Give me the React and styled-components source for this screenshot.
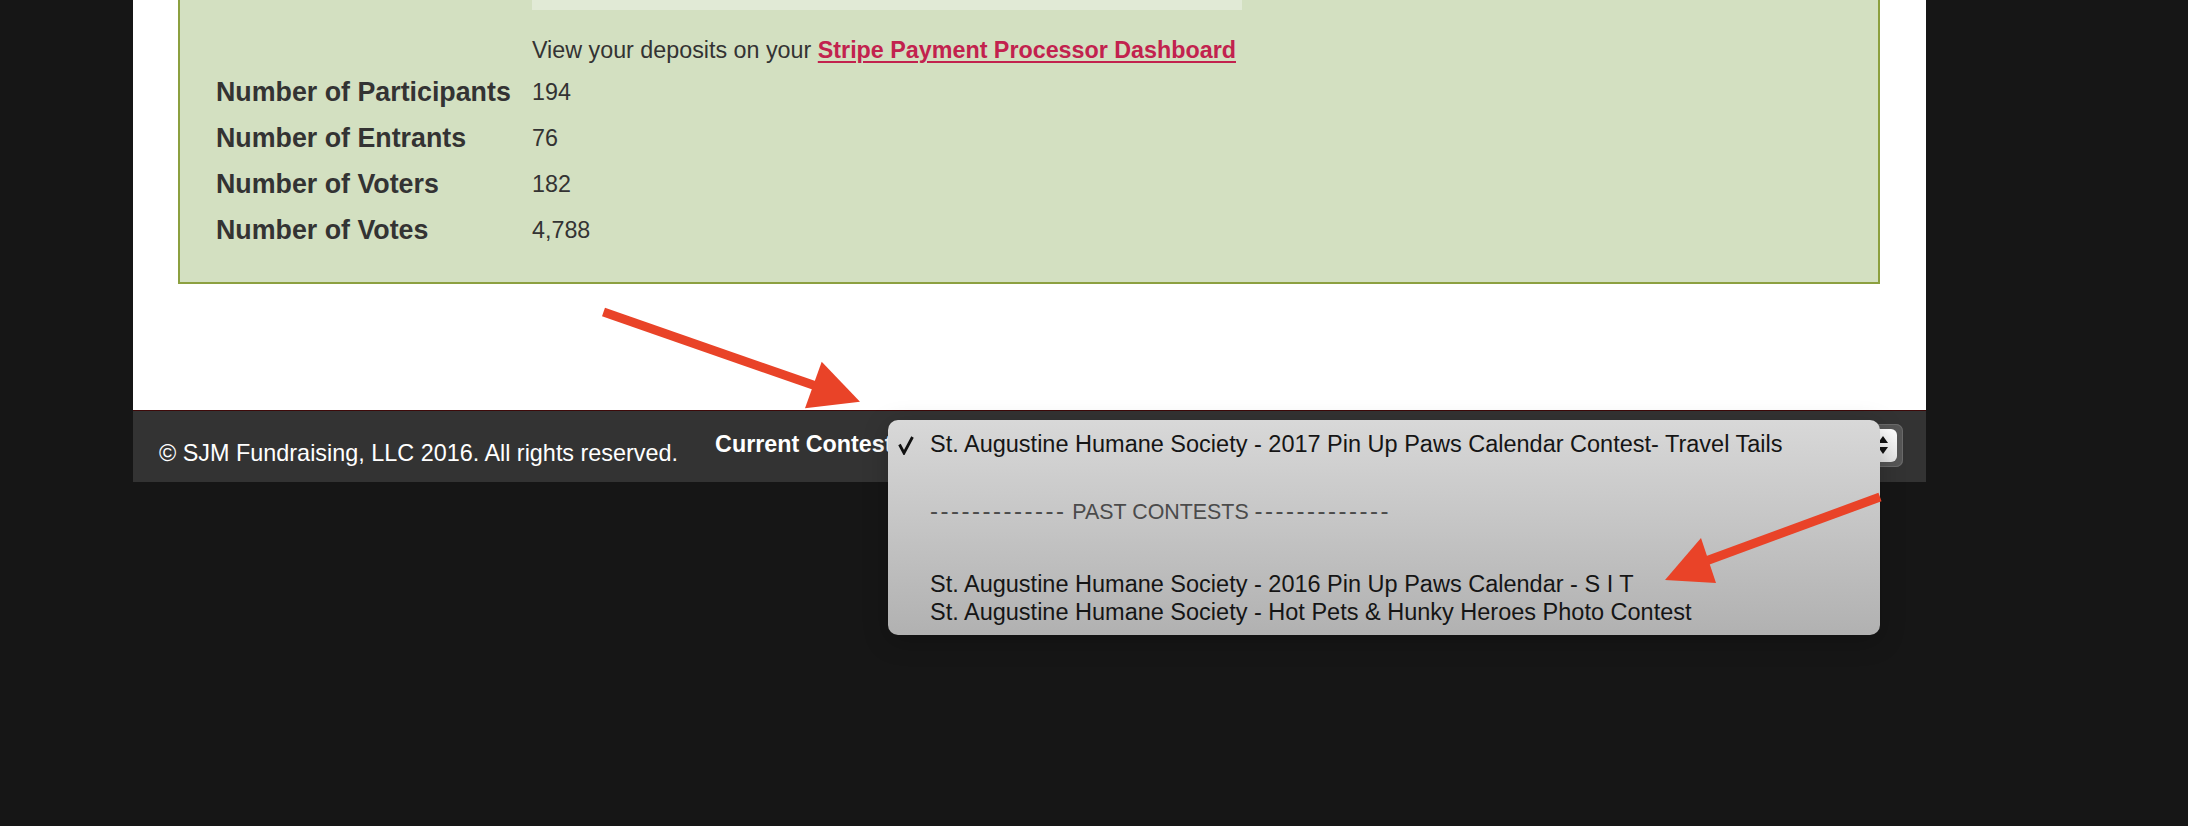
import { Fragment } from "react";
import styled, { createGlobalStyle } from "styled-components";

const GlobalStyle = createGlobalStyle`
  html, body {
    margin: 0;
    padding: 0;
    background: #161616;
  }
  body {
    font-family: "Liberation Sans", Arial, sans-serif;
    overflow: hidden;
  }
`;

const Screen = styled.div`
  position: relative;
  width: 2188px;
  height: 826px;
  padding-left: 133px;
  box-sizing: border-box;
`;

const Page = styled.div`
  width: 1793px;
  display: flex;
  flex-direction: column;
`;

const Content = styled.div`
  background: #fff;
  height: 410px;
  padding: 0 46px 0 45px;
  box-sizing: border-box;
`;

const StatsPanel = styled.div`
  display: grid;
  grid-template-columns: 316px 1fr;
  background: #d3e0c1;
  border: 2px solid #8ca040;
  border-top: 0;
  padding: 0 0 28.5px 36px;
  color: #333;
`;

const NoteBox = styled.div`
  grid-column: 2;
  width: 710px;
  height: 10px;
  background: #e1ead6;
`;

const Deposit = styled.div`
  grid-column: 2;
  margin: 26px 0 5.2px;
  font-size: 23.3px;
  line-height: 28px;
`;

const StripeLink = styled.a`
  color: #c2224e;
  font-weight: bold;
  text-decoration: underline;
  text-decoration-thickness: 2px;
  text-underline-offset: 3px;
`;

const Label = styled.div`
  font-size: 26.8px;
  font-weight: bold;
  line-height: 46px;
`;

const Value = styled.div`
  font-size: 23.3px;
  line-height: 46px;
`;

const Footer = styled.footer`
  height: 72px;
  box-sizing: border-box;
  background: #333;
  border-top: 1.5px solid #3e0909;
  display: flex;
  align-items: flex-start;
  padding: 12.5px 23px 0 26px;
`;

const Copyright = styled.div`
  margin-top: 15.6px;
  color: #fff;
  font-size: 23.4px;
  line-height: 28px;
  white-space: nowrap;
`;

const ContestLabel = styled.div`
  margin: 6.9px 0 0 37px;
  color: #fff;
  font-size: 23.3px;
  font-weight: bold;
  line-height: 28px;
  white-space: nowrap;
`;

const Select = styled.div`
  flex: 1;
  height: 43px;
  margin-left: 4px;
  border-radius: 7px;
  background: #565656;
  box-shadow: inset 0 0 0 1px #6a6a6a;
  display: flex;
  justify-content: flex-end;
  align-items: center;
  padding-right: 6px;
`;

const Stepper = styled.div`
  width: 25px;
  height: 33px;
  border-radius: 6px;
  background: linear-gradient(#ffffff, #e4e4e4);
  display: flex;
  align-items: center;
  justify-content: center;
  padding-right: 3px;
  box-sizing: border-box;
`;

const Menu = styled.div`
  position: absolute;
  left: 888px;
  top: 420px;
  width: 992px;
  box-sizing: border-box;
  padding: 10px 0 9.4px;
  border-radius: 10px;
  background: linear-gradient(to bottom, #d8d8d8, #b1b1b1);
  box-shadow: 0 6px 26px rgba(0, 0, 0, 0.22);
  z-index: 2;
`;

const Option = styled.div`
  position: relative;
  padding-left: 42px;
  font-size: 23.5px;
  line-height: 28px;
  color: #151515;
  white-space: nowrap;
`;

const Check = styled.svg`
  position: absolute;
  left: 10px;
  top: 5px;
`;

const Separator = styled.div`
  height: 28px;
  margin: 39.9px 0 43.7px;
  padding-left: 42px;
  font-size: 21.4px;
  line-height: 28px;
  color: #4b4b4b;
  white-space: nowrap;
`;

const Dashes = styled.span`
  font-size: 24px;
  line-height: 0;
  letter-spacing: 2.5px;
`;

const Annotations = styled.svg`
  position: absolute;
  left: 0;
  top: 0;
  pointer-events: none;
  z-index: 5;
`;

const stats = [
  ["Number of Participants", "194"],
  ["Number of Entrants", "76"],
  ["Number of Voters", "182"],
  ["Number of Votes", "4,788"],
];

const pastContests = [
  "St. Augustine Humane Society - 2016 Pin Up Paws Calendar - S I T",
  "St. Augustine Humane Society - Hot Pets & Hunky Heroes Photo Contest",
];

export default function App() {
  return (
    <Screen>
      <GlobalStyle />
      <Page>
        <Content>
          <StatsPanel>
            <NoteBox />
            <Deposit>
              View your deposits on your{" "}
              <StripeLink href="#">Stripe Payment Processor Dashboard</StripeLink>
            </Deposit>
            {stats.map(([label, value]) => (
              <Fragment key={label}>
                <Label>{label}</Label>
                <Value>{value}</Value>
              </Fragment>
            ))}
          </StatsPanel>
        </Content>
        <Footer>
          <Copyright>© SJM Fundraising, LLC 2016. All rights reserved.</Copyright>
          <ContestLabel>Current Contest:</ContestLabel>
          <Select>
            <Stepper>
              <svg width="12" height="22" viewBox="0 0 12 22">
                <path d="M6 2 L11 9 H1 Z" fill="#111" />
                <path d="M6 20 L11 13 H1 Z" fill="#111" />
              </svg>
            </Stepper>
          </Select>
        </Footer>
      </Page>

      <Menu>
        <Option>
          <Check width="16" height="20" viewBox="0 0 16 20">
            <path
              d="M1.5 9.5 L6 18 L14.5 2"
              fill="none"
              stroke="#111"
              strokeWidth="2.8"
              strokeLinejoin="miter"
            />
          </Check>
          St. Augustine Humane Society - 2017 Pin Up Paws Calendar Contest- Travel Tails
        </Option>
        <Separator>
          <Dashes>-------------</Dashes> PAST CONTESTS <Dashes>-------------</Dashes>
        </Separator>
        {pastContests.map((name) => (
          <Option key={name}>{name}</Option>
        ))}
      </Menu>

      <Annotations width="2188" height="826" viewBox="0 0 2188 826">
        <line x1="603.5" y1="312" x2="816" y2="386" stroke="#e94328" strokeWidth="9" />
        <polygon points="821.7,361.7 860,401.7 805,408.3" fill="#e94328" />
        <line x1="1880" y1="497" x2="1706" y2="561" stroke="#e94328" strokeWidth="9" />
        <polygon points="1701,538 1716,583 1665,580" fill="#e94328" />
      </Annotations>
    </Screen>
  );
}
